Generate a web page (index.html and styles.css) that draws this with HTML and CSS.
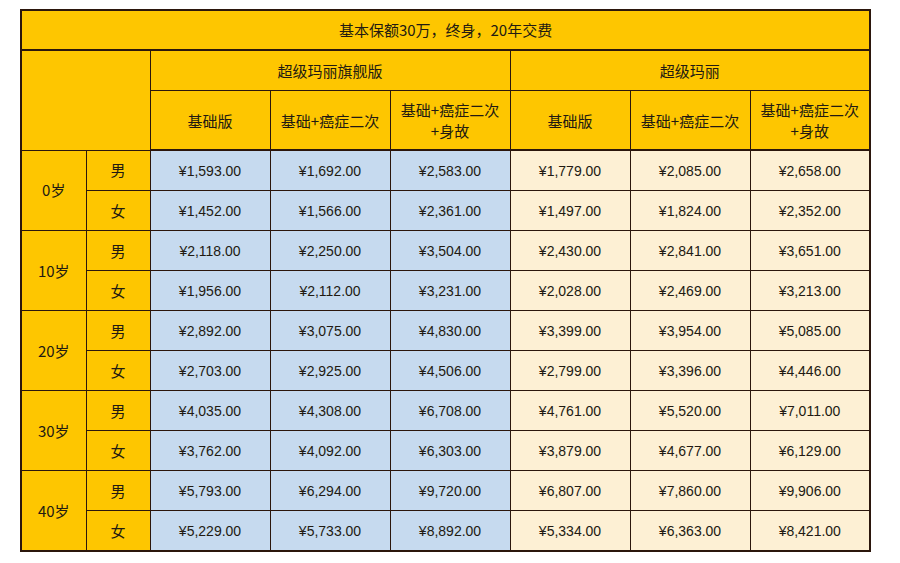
FILE: index.html
```html
<!DOCTYPE html>
<html lang="zh">
<head>
<meta charset="utf-8">
<title>超级玛丽保费表</title>
<link rel="stylesheet" href="styles.css">
</head>
<body>
<div class="wrap">
<table class="rates">
  <colgroup>
    <col class="c-age"><col class="c-sex">
    <col class="c-data"><col class="c-data"><col class="c-data">
    <col class="c-data"><col class="c-data"><col class="c-data">
  </colgroup>
  <thead>
    <tr class="r-title"><th colspan="8">基本保额30万，终身，20年交费</th></tr>
    <tr class="r-h1">
      <th colspan="2" rowspan="2" class="blank"></th>
      <th colspan="3">超级玛丽旗舰版</th>
      <th colspan="3">超级玛丽</th>
    </tr>
    <tr class="r-h2">
      <th>基础版</th><th>基础+癌症二次</th><th>基础+癌症二次<br>+身故</th>
      <th>基础版</th><th>基础+癌症二次</th><th>基础+癌症二次<br>+身故</th>
    </tr>
  </thead>
  <tbody>
    <tr><th rowspan="2" class="age">0岁</th><th class="sex">男</th>
      <td class="b">¥1,593.00</td><td class="b">¥1,692.00</td><td class="b">¥2,583.00</td>
      <td class="y">¥1,779.00</td><td class="y">¥2,085.00</td><td class="y">¥2,658.00</td></tr>
    <tr><th class="sex">女</th>
      <td class="b">¥1,452.00</td><td class="b">¥1,566.00</td><td class="b">¥2,361.00</td>
      <td class="y">¥1,497.00</td><td class="y">¥1,824.00</td><td class="y">¥2,352.00</td></tr>
    <tr><th rowspan="2" class="age">10岁</th><th class="sex">男</th>
      <td class="b">¥2,118.00</td><td class="b">¥2,250.00</td><td class="b">¥3,504.00</td>
      <td class="y">¥2,430.00</td><td class="y">¥2,841.00</td><td class="y">¥3,651.00</td></tr>
    <tr><th class="sex">女</th>
      <td class="b">¥1,956.00</td><td class="b">¥2,112.00</td><td class="b">¥3,231.00</td>
      <td class="y">¥2,028.00</td><td class="y">¥2,469.00</td><td class="y">¥3,213.00</td></tr>
    <tr><th rowspan="2" class="age">20岁</th><th class="sex">男</th>
      <td class="b">¥2,892.00</td><td class="b">¥3,075.00</td><td class="b">¥4,830.00</td>
      <td class="y">¥3,399.00</td><td class="y">¥3,954.00</td><td class="y">¥5,085.00</td></tr>
    <tr><th class="sex">女</th>
      <td class="b">¥2,703.00</td><td class="b">¥2,925.00</td><td class="b">¥4,506.00</td>
      <td class="y">¥2,799.00</td><td class="y">¥3,396.00</td><td class="y">¥4,446.00</td></tr>
    <tr><th rowspan="2" class="age">30岁</th><th class="sex">男</th>
      <td class="b">¥4,035.00</td><td class="b">¥4,308.00</td><td class="b">¥6,708.00</td>
      <td class="y">¥4,761.00</td><td class="y">¥5,520.00</td><td class="y">¥7,011.00</td></tr>
    <tr><th class="sex">女</th>
      <td class="b">¥3,762.00</td><td class="b">¥4,092.00</td><td class="b">¥6,303.00</td>
      <td class="y">¥3,879.00</td><td class="y">¥4,677.00</td><td class="y">¥6,129.00</td></tr>
    <tr><th rowspan="2" class="age">40岁</th><th class="sex">男</th>
      <td class="b">¥5,793.00</td><td class="b">¥6,294.00</td><td class="b">¥9,720.00</td>
      <td class="y">¥6,807.00</td><td class="y">¥7,860.00</td><td class="y">¥9,906.00</td></tr>
    <tr><th class="sex">女</th>
      <td class="b">¥5,229.00</td><td class="b">¥5,733.00</td><td class="b">¥8,892.00</td>
      <td class="y">¥5,334.00</td><td class="y">¥6,363.00</td><td class="y">¥8,421.00</td></tr>
  </tbody>
</table>
</div>
</body>
</html>
```

FILE: styles.css
```css
html, body {
  margin: 0;
  padding: 0;
  background: #ffffff;
}

.wrap {
  padding: 9px 0 0 20px;
}

.rates {
  border-collapse: collapse;
  table-layout: fixed;
  width: 849px;
  border: 2px solid #2b160c;
  font-family: "Liberation Sans", "Noto Sans CJK SC", sans-serif;
  color: #221a12;
}

.c-age { width: 65px; }
.c-sex { width: 64px; }
.c-data { width: 120px; }

.rates th,
.rates td {
  border: 1px solid #2b160c;
  padding: 0;
  text-align: center;
  vertical-align: middle;
  font-weight: normal;
}

.rates th {
  background: #fec600;
  font-family: "Noto Sans CJK SC", "Liberation Sans", sans-serif;
  font-size: 15px;
  line-height: 20px;
}

.r-title th {
  height: 38px;
  border-bottom: 2px solid #2b160c;
}

.r-h1 th { height: 39px; }

.r-h2 th {
  height: 58px;
  border-bottom: 2px solid #2b160c;
  line-height: 21px;
}

.rates tbody tr { height: 40px; }

.rates td {
  font-size: 14px;
  height: 39px;
}

.rates td.b { background: #c6daef; }
.rates td.y { background: #fdf0d4; }
```
